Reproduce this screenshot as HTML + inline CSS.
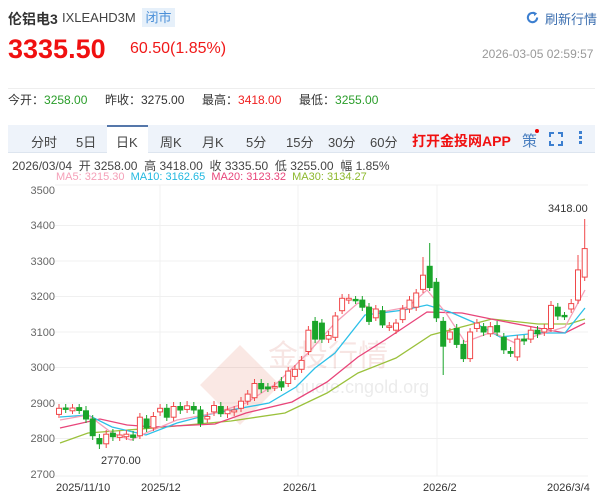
<!DOCTYPE html><html><head><meta charset="utf-8"><style>
*{margin:0;padding:0;box-sizing:border-box}
body{width:600px;height:493px;background:#fff;font-family:"Liberation Sans","Noto Sans CJK SC",sans-serif;position:relative;overflow:hidden;color:#333}
.a{position:absolute;white-space:nowrap}
</style></head><body>
<div class="a" style="left:8px;top:9px;font-size:14px;font-weight:bold;color:#333">伦铝电3</div>
<div class="a" style="left:62px;top:10px;font-size:13px;color:#444">IXLEAHD3M</div>
<div class="a" style="left:142px;top:8px;width:33px;height:19px;background:#e6f0fa;color:#4a8fd8;font-size:13px;text-align:center;line-height:19px">闭市</div>
<svg class="a" style="left:526px;top:11px" width="13" height="13" viewBox="0 0 14 14"><path d="M12 7A5 5 0 1 1 9.5 2.7" fill="none" stroke="#3c7fd0" stroke-width="2.2"/><path d="M8 0.5L12 2.5L9 5.5Z" fill="#3c7fd0"/></svg>
<div class="a" style="left:545px;top:9px;font-size:13px;color:#3c6fb0">刷新行情</div>
<div class="a" style="left:8px;top:34px;font-size:27px;font-weight:bold;color:#f01010">3335.50</div>
<div class="a" style="left:130px;top:40px;font-size:16px;color:#f01818">60.50(1.85%)</div>
<div class="a" style="left:482px;top:47px;font-size:12px;color:#999">2026-03-05 02:59:57</div>
<div class="a" style="left:8px;top:88px;width:587px;height:1px;background:#eee"></div>
<div class="a" style="left:8px;top:91px;font-size:12px;color:#333">今开：<span style="color:#2a9d2a">3258.00</span></div>
<div class="a" style="left:105px;top:91px;font-size:12px;color:#333">昨收：3275.00</div>
<div class="a" style="left:202px;top:91px;font-size:12px;color:#333">最高：<span style="color:#f02020">3418.00</span></div>
<div class="a" style="left:299px;top:91px;font-size:12px;color:#333">最低：<span style="color:#2a9d2a">3255.00</span></div>
<div class="a" style="left:8px;top:125px;width:587px;height:28px;background:#eef3fa;border-bottom:1px solid #dde5ef"></div>
<div class="a" style="left:107px;top:125px;width:41px;height:29px;background:#fff;border-top:2px solid #5577aa"></div>
<div class="a" style="left:0;top:132px;font-size:13px;color:#444;width:600px">
<span class="a" style="left:31px">分时</span><span class="a" style="left:76px">5日</span><span class="a" style="left:116px">日K</span><span class="a" style="left:160px">周K</span><span class="a" style="left:202px">月K</span><span class="a" style="left:246px">5分</span><span class="a" style="left:286px">15分</span><span class="a" style="left:328px">30分</span><span class="a" style="left:370px">60分</span>
<span class="a" style="left:412px;color:#f01010;font-weight:bold;font-size:14px;top:-1px">打开金投网APP</span>
<span class="a" style="left:522px;color:#4a7fc0;font-size:15px;top:-2px">策</span></div>
<div class="a" style="left:535px;top:129px;width:4px;height:4px;border-radius:2px;background:#e00"></div>
<svg class="a" style="left:549px;top:132px" width="14" height="14"><path d="M1 5V1H5M9 1H13V5M13 9V13H9M5 13H1V9" fill="none" stroke="#3c7fd0" stroke-width="2"/></svg>
<div class="a" style="left:579px;top:131px;width:3px;height:3px;background:#3c7fd0;box-shadow:0 5px #3c7fd0,0 10px #3c7fd0"></div>
<div class="a" style="left:12px;top:157px;font-size:12px;color:#444">2026/03/04&nbsp; 开 3258.00&nbsp; 高 3418.00&nbsp; 收 3335.50&nbsp; 低 3255.00&nbsp; 幅 1.85%</div>
<div class="a" style="left:56px;top:171px;font-size:11px"><span style="color:#f5a0b8">MA5: 3215.30</span>&nbsp;&nbsp;<span style="color:#22b8e0">MA10: 3162.65</span>&nbsp;&nbsp;<span style="color:#e8457a">MA20: 3123.32</span>&nbsp;&nbsp;<span style="color:#8db82c">MA30: 3134.27</span></div>
<svg class="a" style="left:0;top:0" width="600" height="493" font-family="Liberation Sans,sans-serif">
<g stroke="#f0f0f0" stroke-width="1">
<line x1="55" y1="185" x2="588" y2="185"/>
<line x1="55" y1="225.5" x2="588" y2="225.5"/><line x1="55" y1="261" x2="588" y2="261"/><line x1="55" y1="296.5" x2="588" y2="296.5"/><line x1="55" y1="332" x2="588" y2="332"/><line x1="55" y1="367.5" x2="588" y2="367.5"/><line x1="55" y1="403" x2="588" y2="403"/><line x1="55" y1="438.5" x2="588" y2="438.5"/><line x1="55" y1="476" x2="588" y2="476"/>
<line x1="160" y1="185" x2="160" y2="476"/><line x1="298" y1="185" x2="298" y2="476"/><line x1="437" y1="185" x2="437" y2="476"/>
</g>
<g font-size="11" fill="#666" text-anchor="end">
<text x="55" y="194">3500</text><text x="55" y="229">3400</text><text x="55" y="265">3300</text><text x="55" y="300">3200</text><text x="55" y="336">3100</text><text x="55" y="371">3000</text><text x="55" y="407">2900</text><text x="55" y="442">2800</text><text x="55" y="478">2700</text></g>
<g font-size="11" fill="#333"><text x="56" y="491">2025/11/10</text><text x="141" y="491">2025/12</text><text x="283" y="491">2026/1</text><text x="423" y="491">2026/2</text><text x="547" y="491">2026/3/4</text>
<text x="101" y="464">2770.00</text><text x="548" y="212">3418.00</text></g>
<g opacity="0.12" fill="#d84020"><path d="M240 345L200 385L240 425L280 385Z"/><text x="268" y="366" font-size="30" font-family="Noto Sans CJK SC" fill="#c03020">金投行情</text><text x="295" y="393" font-size="18" fill="#666">quote.cngold.org</text></g>
<g fill="none" stroke-width="1.3">
<polyline stroke="#9bc13c" points="60,443 88,433 154,428 231,421 285,413 327,393 358,373 396,358 431,335 492,319 538,324 569,324 585,319"/>
<polyline stroke="#e8457a" points="60,428 100,419 127,425 154,427 215,424 246,413 292,402 327,382 358,357 385,340 427,312 462,313 496,320 538,328 565,333 585,323"/>
<polyline stroke="#2cc0e8" points="60,417 88,415 112,427 146,435 177,423 215,413 269,403 296,387 315,368 335,353 365,315 404,310 427,305 450,312 473,322 500,337 538,333 565,333 585,308"/>
<polyline stroke="#f5a0b8" points="60,420 88,415 112,433 131,440 146,433 177,420 215,413 246,403 277,383 308,353 335,323 358,303 381,312 408,307 427,290 446,313 465,342 492,332 515,343 538,335 565,327 585,290"/>
</g>
<g stroke="#f0494b" fill="#fff" stroke-width="1">
<path d="M59 404V418M72.5 404V414M106.2 430V448M119.7 431V441M126.4 430V440M139.9 413V439M153.4 412V431M160.1 404V416M173.6 402V421M187.1 401V413M207.3 412V423M214 401V416M227.5 406V418M234.2 406V416M241 397V412M247.7 390V405M254.5 379V401M274.7 382V391M288.2 367V387M294.9 365V380M301.6 356V373M308.4 326V355M328.6 331V343M335.3 312V341M342.1 294V314M348.8 294V304M375.8 305V321M389.3 322V331M396 319V334M402.7 305V323M409.5 296V313M416.2 289V311M423 257V293M449.9 328V343M470.1 328V362M476.9 319V332M490.4 322V337M517.3 335V361M530.8 326V343M544.3 324V336M551 301V332M571.2 299V313M578 255V304M584.7 219V281"/>
<rect x="56.5" y="408.3" width="5" height="6.1"/><rect x="70" y="408" width="5" height="2.8"/><rect x="103.7" y="434.2" width="5" height="9.6"/><rect x="117.2" y="435" width="5" height="2.4"/><rect x="123.9" y="434.2" width="5" height="2.5"/><rect x="137.4" y="417.2" width="5" height="18.5"/><rect x="150.9" y="416.5" width="5" height="11.4"/><rect x="157.6" y="408.3" width="5" height="3.6"/><rect x="171.1" y="406.5" width="5" height="10.7"/><rect x="184.6" y="405.8" width="5" height="3.6"/><rect x="204.8" y="416.5" width="5" height="2.5"/><rect x="211.5" y="405.5" width="5" height="6.4"/><rect x="225" y="410" width="5" height="3.7"/><rect x="231.7" y="410" width="5" height="1.9"/><rect x="238.5" y="401.2" width="5" height="7.1"/><rect x="245.2" y="394.1" width="5" height="7.1"/><rect x="252" y="383.5" width="5" height="14.2"/><rect x="272.2" y="386.5" width="5" height="1.5"/><rect x="285.7" y="371.1" width="5" height="12.4"/><rect x="292.4" y="369.3" width="5" height="7.1"/><rect x="299.1" y="360.4" width="5" height="8.9"/><rect x="305.9" y="330.2" width="5" height="21.3"/><rect x="326.1" y="335.5" width="5" height="3.6"/><rect x="332.8" y="316" width="5" height="21.3"/><rect x="339.6" y="298.3" width="5" height="12.4"/><rect x="346.3" y="298.3" width="5" height="1.8"/><rect x="373.3" y="309" width="5" height="8.8"/><rect x="386.8" y="325.9" width="5" height="1.5"/><rect x="393.5" y="323.1" width="5" height="7.1"/><rect x="400.2" y="309" width="5" height="10.6"/><rect x="407" y="300.1" width="5" height="8.9"/><rect x="413.7" y="293" width="5" height="14.2"/><rect x="420.5" y="275.2" width="5" height="14.2"/><rect x="447.4" y="332" width="5" height="7.1"/><rect x="467.6" y="332" width="5" height="26.6"/><rect x="474.4" y="323.1" width="5" height="5.4"/><rect x="487.9" y="326.7" width="5" height="7.1"/><rect x="514.8" y="339.1" width="5" height="17.8"/><rect x="528.3" y="330.2" width="5" height="8.9"/><rect x="541.8" y="328.5" width="5" height="3.5"/><rect x="548.5" y="305.4" width="5" height="23.1"/><rect x="568.7" y="303.6" width="5" height="5.4"/><rect x="575.5" y="269.9" width="5" height="30.2"/><rect x="582.2" y="248.6" width="5" height="28.5"/>
</g>
<g stroke="#1aa52a" fill="#1aa52a" stroke-width="1">
<path d="M65.7 404V413M79.2 404V414M86 406V423M92.7 415V440M99.4 434V449M112.9 429V441M133.1 431V441M146.6 415V432M166.8 404V421M180.3 402V414M193.8 402V414M200.5 406V427M220.8 402V417M261.2 379V393M267.9 383V392M281.4 377V391M315.1 317V343M321.9 319V343M355.6 296V304M362.3 296V311M369 303V325M382.5 306V328M429.7 243V291M436.4 278V322M443.2 317V375M456.7 324V348M463.4 340V362M483.6 323V336M497.1 321V336M503.8 333V354M510.6 347V357M524.1 335V345M537.5 326V338M557.8 303V320M564.5 312V320"/>
<rect x="63.2" y="408" width="5" height="1.4"/><rect x="76.7" y="407.6" width="5" height="2.9"/><rect x="83.5" y="410.8" width="5" height="8.2"/><rect x="90.2" y="419" width="5" height="16.7"/><rect x="96.9" y="438.5" width="5" height="5.3"/><rect x="110.4" y="433.2" width="5" height="3.5"/><rect x="130.6" y="435" width="5" height="2.4"/><rect x="144.1" y="419" width="5" height="8.9"/><rect x="164.3" y="408.3" width="5" height="8.9"/><rect x="177.8" y="406.5" width="5" height="3.5"/><rect x="191.3" y="406.5" width="5" height="3.5"/><rect x="198" y="410" width="5" height="13.2"/><rect x="218.3" y="406.5" width="5" height="7.2"/><rect x="258.7" y="383.5" width="5" height="5.3"/><rect x="265.4" y="387" width="5" height="1.8"/><rect x="278.9" y="381.7" width="5" height="5.3"/><rect x="312.6" y="321.4" width="5" height="17.7"/><rect x="319.4" y="323.1" width="5" height="16"/><rect x="353.1" y="299.4" width="5" height="1.4"/><rect x="359.8" y="300.1" width="5" height="7.1"/><rect x="366.5" y="307.2" width="5" height="14.2"/><rect x="380" y="310.7" width="5" height="14.2"/><rect x="427.2" y="266.3" width="5" height="21.3"/><rect x="433.9" y="282.3" width="5" height="35.5"/><rect x="440.7" y="321.4" width="5" height="24.8"/><rect x="454.2" y="328.5" width="5" height="15.9"/><rect x="460.9" y="344.4" width="5" height="14.2"/><rect x="481.1" y="326.7" width="5" height="5.3"/><rect x="494.6" y="325.6" width="5" height="6.4"/><rect x="501.3" y="337.3" width="5" height="12.5"/><rect x="508.1" y="351.5" width="5" height="1.8"/><rect x="521.6" y="339.1" width="5" height="1.8"/><rect x="535" y="330.2" width="5" height="3.6"/><rect x="555.3" y="307.2" width="5" height="8.8"/><rect x="562" y="315.4" width="5" height="1.4"/>
</g>
</svg>
</body></html>
